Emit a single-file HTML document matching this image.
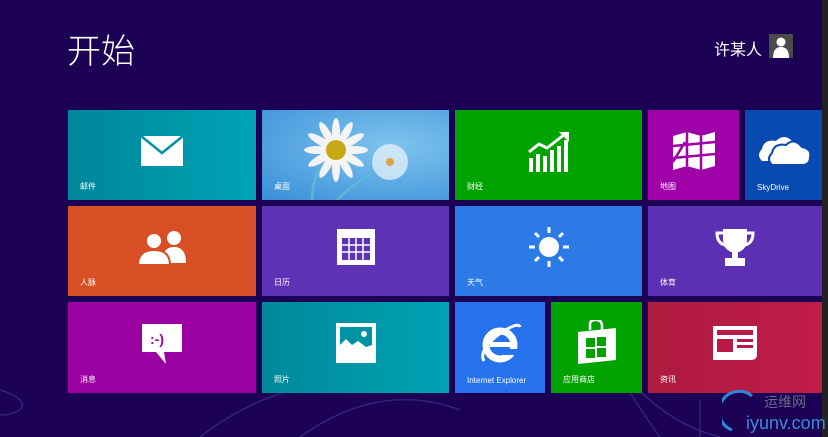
<!DOCTYPE html>
<html><head><meta charset="utf-8"><style>
*{margin:0;padding:0;box-sizing:border-box}
body{width:828px;height:437px;overflow:hidden;background:#1c0054;font-family:"Liberation Sans","Noto Sans CJK SC",sans-serif;position:relative;color:#fff}
.t{position:absolute;overflow:hidden}
.l{position:absolute;left:12px;bottom:8px;font-size:8px;color:#fff}
.i{position:absolute;left:50%;top:45%;transform:translate(-50%,-50%)}
</style></head><body>
<svg style="position:absolute;left:0;top:300px" width="828" height="137">
<g fill="none" stroke="#3a2a8a" stroke-width="1.5" opacity=".8">
<path d="M0 90 Q30 100 20 110 Q0 120 -10 110"/>
<path d="M200 137 Q300 60 420 90"/>
<path d="M300 137 Q380 80 460 110"/>
<path d="M600 40 Q650 120 720 137"/>
<path d="M610 60 Q640 110 660 137"/>
<path d="M700 100 L700 137"/>
</g></svg>
<div style="position:absolute;left:67px;top:24px;font-size:34px;font-weight:300;font-family:'Noto Sans CJK SC',sans-serif">开始</div>
<div style="position:absolute;left:714px;top:36px;font-size:16px;font-family:'Noto Sans CJK SC',sans-serif">许某人</div>
<div style="position:absolute;left:769px;top:34px;width:24px;height:24px;background:#4a4a4a">
<svg width="24" height="24"><circle cx="12" cy="8" r="4.5" fill="#fff"/><path d="M4 24 Q4 13 12 13 Q20 13 20 24Z" fill="#fff"/></svg></div>
<div style="position:absolute;left:822px;top:0;width:6px;height:437px;background:#222"></div>

<div class="t" style="left:68px;top:110px;width:188px;height:90px;background:linear-gradient(90deg,#00859a,#00a3b5)">
<svg class="i" width="44" height="32" viewBox="0 0 44 32"><rect x="1" y="1" width="42" height="30" fill="#fff"/><path d="M1 1 L22 18 L43 1" fill="none" stroke="#0094a8" stroke-width="2.5"/></svg><div class="l">邮件</div></div>
<div class="t" style="left:262px;top:110px;width:187px;height:90px;background:radial-gradient(ellipse at 70% 40%,#7ec4ee,#3a8ed8)">
<svg width="187" height="90"><path d="M60 55 Q50 70 50 90M75 90 Q95 70 125 55" stroke="#5ab8d8" stroke-width="2.5" fill="none"/>
<g fill="#f4f4f4"><g transform="translate(74,40)">
<ellipse cx="0" cy="-18" rx="4" ry="14"/><ellipse cx="0" cy="-18" rx="4" ry="14" transform="rotate(30)"/><ellipse cx="0" cy="-18" rx="4" ry="14" transform="rotate(60)"/><ellipse cx="0" cy="-18" rx="4" ry="14" transform="rotate(90)"/><ellipse cx="0" cy="-18" rx="4" ry="14" transform="rotate(120)"/><ellipse cx="0" cy="-18" rx="4" ry="14" transform="rotate(150)"/><ellipse cx="0" cy="-18" rx="4" ry="14" transform="rotate(180)"/><ellipse cx="0" cy="-18" rx="4" ry="14" transform="rotate(210)"/><ellipse cx="0" cy="-18" rx="4" ry="14" transform="rotate(240)"/><ellipse cx="0" cy="-18" rx="4" ry="14" transform="rotate(270)"/><ellipse cx="0" cy="-18" rx="4" ry="14" transform="rotate(300)"/><ellipse cx="0" cy="-18" rx="4" ry="14" transform="rotate(330)"/></g></g>
<circle cx="74" cy="40" r="10" fill="#c9a815"/><g fill="#e8f2fa" opacity=".75"><circle cx="128" cy="52" r="18"/></g><circle cx="128" cy="52" r="4" fill="#e0a040"/></svg><div class="l">桌面</div></div>
<div class="t" style="left:455px;top:110px;width:187px;height:90px;background:#00a300">
<svg class="i" width="44" height="42" viewBox="0 0 44 42"><g fill="#fff"><rect x="2" y="28" width="4" height="14"/><rect x="9" y="24" width="4" height="18"/><rect x="16" y="26" width="4" height="16"/><rect x="23" y="20" width="4" height="22"/><rect x="30" y="16" width="4" height="26"/><rect x="37" y="10" width="4" height="32"/></g><path d="M2 22 L12 14 L20 18 L38 4" stroke="#fff" stroke-width="3" fill="none"/><path d="M32 2 L42 2 L42 12Z" fill="#fff"/></svg><div class="l">财经</div></div>
<div class="t" style="left:648px;top:110px;width:91px;height:90px;background:#a000a8">
<svg class="i" width="46" height="38" viewBox="0 0 46 38"><path d="M2 4 L16 0 L30 4 L44 0 L44 34 L30 38 L16 34 L2 38Z" fill="#fff"/><path d="M2 14 L44 10M2 26 L44 22M16 0 L16 34M30 4 L30 38M2 30 L14 10" stroke="#a000a8" stroke-width="2.5"/></svg><div class="l">地图</div></div>
<div class="t" style="left:745px;top:110px;width:77px;height:90px;background:#094ab2">
<svg class="i" width="56" height="32" viewBox="0 0 56 32"><path d="M6 26 Q0 20 6 14 Q8 4 20 6 Q28 -2 36 6 L30 26Z" fill="#fff"/><path d="M16 30 Q10 24 16 18 Q18 8 30 10 Q38 2 46 12 Q56 14 54 22 Q54 30 46 30Z" fill="#fff" stroke="#094ab2" stroke-width="2"/></svg><div class="l">SkyDrive</div></div>

<div class="t" style="left:68px;top:206px;width:188px;height:90px;background:#d84f26">
<svg class="i" width="52" height="36" viewBox="0 0 52 36"><g fill="#fff"><circle cx="38" cy="9" r="7"/><path d="M26 34 Q26 18 38 18 Q50 18 50 34Z"/><circle cx="18" cy="12" r="8" stroke="#d84f26" stroke-width="2"/><path d="M2 36 Q2 21 18 21 Q34 21 34 36Z" stroke="#d84f26" stroke-width="2"/></g></svg><div class="l">人脉</div></div>
<div class="t" style="left:262px;top:206px;width:187px;height:90px;background:#5e32b4">
<svg class="i" width="40" height="38" viewBox="0 0 40 38"><rect x="1" y="1" width="38" height="36" fill="#fff"/><g fill="#5e32b4"><rect x="6" y="10" width="28" height="22"/></g><g stroke="#fff" stroke-width="1.5"><path d="M13 10V32M20 10V32M27 10V32M6 17H34M6 24H34"/></g></svg><div class="l">日历</div></div>
<div class="t" style="left:455px;top:206px;width:187px;height:90px;background:#2b7ae6">
<svg class="i" width="44" height="44" viewBox="0 0 44 44"><circle cx="22" cy="22" r="10" fill="#fff"/><g stroke="#fff" stroke-width="3"><path d="M22 2V8M22 36V42M2 22H8M36 22H42M8 8L12 12M32 32L36 36M36 8L32 12M8 36L12 32"/></g></svg><div class="l">天气</div></div>
<div class="t" style="left:648px;top:206px;width:174px;height:90px;background:#5b30b2">
<svg class="i" width="40" height="40" viewBox="0 0 40 40"><path d="M8 2H32V12Q32 24 20 26Q8 24 8 12Z" fill="#fff"/><path d="M8 6H2Q2 16 10 18M32 6H38Q38 16 30 18" stroke="#fff" stroke-width="3" fill="none"/><rect x="17" y="25" width="6" height="6" fill="#fff"/><rect x="10" y="31" width="20" height="8" fill="#fff"/></svg><div class="l">体育</div></div>

<div class="t" style="left:68px;top:302px;width:188px;height:91px;background:#9b00a3">
<svg class="i" width="44" height="42" viewBox="0 0 44 42"><path d="M2 2H42V30H24L26 42L16 30H2Z" fill="#fff"/><text x="10" y="22" font-size="14" font-weight="bold" fill="#9b00a3" font-family="Liberation Sans">:-)</text></svg><div class="l">消息</div></div>
<div class="t" style="left:262px;top:302px;width:187px;height:91px;background:linear-gradient(90deg,#00899a,#00a2b4)">
<svg class="i" width="40" height="40" viewBox="0 0 40 40"><rect x="0" y="0" width="40" height="40" fill="#fff"/><rect x="4" y="4" width="32" height="28" fill="#0093a6"/><path d="M4 32V22L10 16L16 22L22 18L30 24L36 22V32Z" fill="#fff"/><circle cx="28" cy="11" r="3" fill="#fff"/></svg><div class="l">照片</div></div>
<div class="t" style="left:455px;top:302px;width:90px;height:91px;background:#2672ec">
<svg class="i" width="44" height="44" viewBox="0 0 44 44"><circle cx="22" cy="24" r="14" fill="none" stroke="#fff" stroke-width="7"/><rect x="12" y="21" width="24" height="5" fill="#fff"/><rect x="26" y="28" width="14" height="6" fill="#2672ec"/><path d="M6 40 Q0 30 20 14 Q40 0 42 6" stroke="#fff" stroke-width="3" fill="none"/></svg><div class="l" style="left:12px">Internet Explorer</div></div>
<div class="t" style="left:551px;top:302px;width:91px;height:91px;background:#00a300">
<svg class="i" width="42" height="46" viewBox="0 0 42 46"><path d="M14 10V4Q14 0 20 0Q26 0 26 6V12" stroke="#fff" stroke-width="2.5" fill="none"/><path d="M2 12L40 8V40L2 44Z" fill="#fff"/><g fill="#00a300"><rect x="10" y="18" width="9" height="9"/><rect x="21" y="17" width="9" height="9"/><rect x="10" y="29" width="9" height="9"/><rect x="21" y="28" width="9" height="9"/></g></svg><div class="l">应用商店</div></div>
<div class="t" style="left:648px;top:302px;width:174px;height:91px;background:linear-gradient(90deg,#ae1a3e,#c01c4a)">
<svg class="i" width="44" height="34" viewBox="0 0 44 34"><path d="M0 0H44V28Q44 34 38 34H0Z" fill="#fff"/><rect x="4" y="4" width="36" height="5" fill="#b51b44"/><rect x="4" y="13" width="16" height="13" fill="#b51b44"/><rect x="24" y="13" width="16" height="3" fill="#b51b44"/><rect x="24" y="19" width="16" height="3" fill="#b51b44"/></svg><div class="l">资讯</div></div>

<svg style="position:absolute;left:722px;top:388px" width="100" height="49"><path d="M30 8 A20 20 0 1 0 10 42" stroke="#2a8ad8" stroke-width="3" fill="none"/></svg>
<div style="position:absolute;left:764px;top:392px;font-size:14px;color:#6a6a8a">运维网</div>
<div style="position:absolute;left:746px;top:413px;font-size:18px;color:#3a8ad8">iyunv.com</div>
</body></html>
